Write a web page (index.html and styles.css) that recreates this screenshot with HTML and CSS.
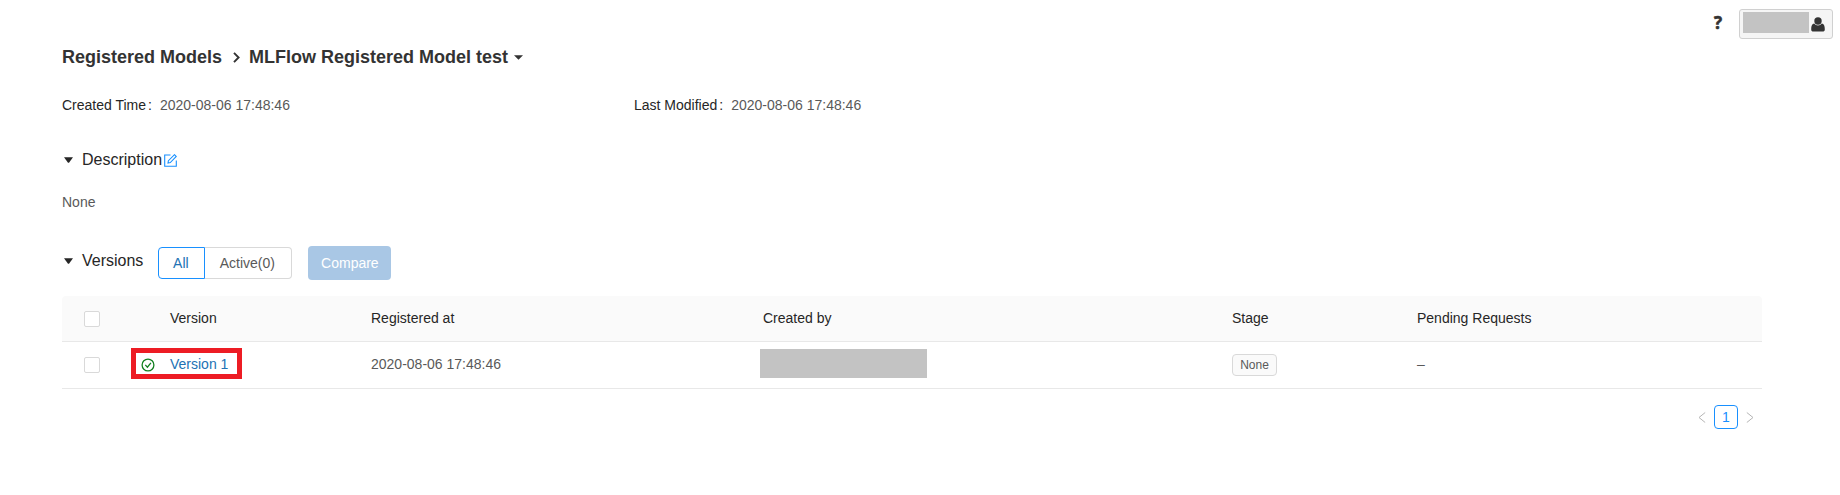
FILE: index.html
```
<!DOCTYPE html>
<html lang="en">
<head>
<meta charset="utf-8">
<title>Registered Model</title>
<link rel="stylesheet" href="styles.css">
</head>
<body>
<header class="topbar">
  <span class="help">?</span>
  <div class="user">
    <span class="user-name"></span>
    <svg class="user-icon" width="14" height="15" viewBox="0 0 14 15"><circle cx="7" cy="4" r="3.7"/><path d="M3.2 6.6C1 7 .2 9 .2 12.2.2 14 1 14.6 2.4 14.6h9.2c1.400 0 2.200-.6 2.200-2.400 0-3.200-.8-5.200-3-5.600C9.800 7.900 8.500 8.500 7 8.500S4.200 7.900 3.200 6.600z"/></svg>
  </div>
</header>
<main class="page">
  <h1 class="title">
    <span class="crumb">Registered Models</span>
    <svg class="chevron" width="7" height="11" viewBox="0 0 7 11"><path d="M1 .8l4.600 4.700L1 10.200"/></svg>
    <span class="model">MLFlow Registered Model test</span>
    <svg class="title-caret" width="9" height="5" viewBox="0 0 9 5"><path d="M0 .2h9L4.500 4.800z"/></svg>
  </h1>
  <dl class="meta">
    <div class="meta-item"><dt>Created Time</dt><dd>2020-08-06 17:48:46</dd></div>
    <div class="meta-item"><dt>Last Modified</dt><dd>2020-08-06 17:48:46</dd></div>
  </dl>
  <section class="section">
    <svg class="caret" width="9" height="6" viewBox="0 0 9 6"><path d="M0 .3h9L5 5.700H4z"/></svg>
    <h2>Description</h2>
    <svg class="edit" width="13" height="13" viewBox="0 0 13 13"><path d="M6.500 1H.7v11.300h11.600V6.500"/><path d="M4 9l.4-2.300L10.500.7l1.800 1.800L6.300 8.600z"/></svg>
  </section>
  <p class="description">None</p>
  <section class="section versions">
    <svg class="caret" width="9" height="6" viewBox="0 0 9 6"><path d="M0 .3h9L5 5.700H4z"/></svg>
    <h2>Versions</h2>
    <div class="filter">
      <button class="option active">All</button><button class="option">Active(0)</button>
    </div>
    <button class="compare">Compare</button>
  </section>
  <table class="table">
    <colgroup><col class="c-check"><col class="c-status"><col class="c-version"><col class="c-date"><col class="c-author"><col class="c-stage"><col></colgroup>
    <thead>
      <tr><th class="check"><span class="checkbox"></span></th><th></th><th>Version</th><th>Registered at</th><th>Created by</th><th>Stage</th><th>Pending Requests</th></tr>
    </thead>
    <tbody>
      <tr>
        <td class="check"><span class="checkbox"></span></td>
        <td class="status"><span class="highlight"></span><svg class="ready" width="14" height="14" viewBox="0 0 14 14"><circle cx="7" cy="7" r="5.900"/><path d="M4.300 6.900l2.100 2.300 3.500-4.400"/></svg></td>
        <td><a class="link">Version 1</a></td>
        <td>2020-08-06 17:48:46</td>
        <td><span class="author"></span></td>
        <td><span class="tag">None</span></td>
        <td>–</td>
      </tr>
    </tbody>
  </table>
  <nav class="pager">
    <svg width="8" height="12" viewBox="0 0 8 12"><path d="M7.200 1.500L1 6.500l6.200 5"/></svg>
    <span class="page-number">1</span>
    <svg width="8" height="12" viewBox="0 0 8 12"><path d="M.8 1.500l6.200 5-6.200 5"/></svg>
  </nav>
</main>
</body>
</html>
```
FILE: styles.css
```
* { box-sizing: border-box; }
body { margin: 0; background: #fff; color: #595959; font: 14px/22px "Liberation Sans", Arial, sans-serif; }
svg { display: block; flex: none; }
button { font: inherit; margin: 0; }

.topbar { display: flex; justify-content: flex-end; align-items: center; height: 39px; padding: 9px 7px 0 0; }
.help { margin-right: 17px; font: bold 17px/28px "Open Sans", sans-serif; color: #333; height: 30px; -webkit-text-stroke: .6px #333; }
.user { display: flex; width: 94px; height: 30px; padding: 2px 0 0 3px; border: 1px solid #d0d0d0; border-radius: 3px; background: #f5f5f5; }
.user-name { width: 66px; height: 21px; background: #c3c3c3; }
.user-icon { margin: 5px 0 0 2px; fill: #333; }

.page { padding: 0 78px 0 62px; }
.title { display: flex; align-items: center; height: 24px; margin: 6px 0 0; font-size: 18px; line-height: 24px; color: #333; white-space: nowrap; }
.crumb { width: 171px; }
.chevron { margin-right: 9px; fill: none; stroke: #333; stroke-width: 1.900; }
.model { width: 265px; }
.title-caret { fill: #333; }

.meta { display: flex; margin: 25px 0 0; height: 22px; }
.meta-item { display: flex; width: 572px; }
dt { color: #262626; }
dt::after { content: ":"; margin: 0 8px 0 2px; }
dd { margin: 0; }

.section { display: flex; align-items: center; height: 24px; margin-top: 32px; }
.caret { margin: 0 9px 0 2px; fill: #262626; }
.section h2 { margin: 0; font-size: 16px; line-height: 24px; font-weight: 400; color: #262626; }
.edit { margin-left: 2px; fill: none; stroke: #1890ff; stroke-width: 1.100; }
.description { margin: 19px 0 0; }
.versions { height: 34px; margin-top: 33px; }
.versions .caret, .versions h2 { margin-bottom: 4px; }
.filter { display: flex; margin-left: 15px; }
.option { width: 87px; height: 32px; padding: 0 2px 0 0; border: 1px solid #d9d9d9; border-left: 0; border-radius: 0 4px 4px 0; background: #fff; color: #595959; }
.option.active { width: 47px; border: 1px solid #1890ff; border-radius: 4px 0 0 4px; color: #2272b4; }
.compare { width: 83px; height: 34px; margin-left: 16px; padding: 0; border: 0; border-radius: 4px; background: #a9c7e5; color: #fff; }

.table { width: 1700px; margin-top: 16px; table-layout: fixed; border-collapse: separate; border-spacing: 0; }
.table th, .table td { height: 47px; padding: 0 0 2px; border-bottom: 1px solid #e8e8e8; text-align: left; font-weight: 400; vertical-align: middle; }
.table th { height: 46px; background: #fafafa; color: #262626; }
.table .check, .table .status { padding-bottom: 0; }
.table th:first-child { border-top-left-radius: 4px; }
.table th:last-child { border-top-right-radius: 4px; }
.c-check { width: 69px; }
.c-status { width: 39px; }
.c-version { width: 201px; }
.c-date { width: 392px; }
.c-author { width: 469px; }
.c-stage { width: 185px; }
.checkbox { display: block; width: 16px; height: 16px; margin-left: 22px; border: 1px solid #d9d9d9; border-radius: 2px; background: #fff; }
.status { position: relative; }
.highlight { position: absolute; left: 0; top: 6px; width: 111px; height: 31px; border: 5px solid #ed1c24; }
.ready { margin: -1px 0 0 10px; fill: none; stroke: #128020; stroke-width: 1.300; }
.link { color: #2272b4; }
.author { display: block; width: 167px; height: 29px; margin-left: -3px; margin-top: -1px; background: #c3c3c3; }
.tag { display: inline-block; width: 45px; height: 22px; border: 1px solid #d9d9d9; border-radius: 4px; background: #fafafa; font-size: 12px; line-height: 20px; text-align: center; vertical-align: middle; }

.pager { display: flex; justify-content: flex-end; align-items: center; margin: 16px 8px 0 0; height: 24px; gap: 8px; }
.pager svg { fill: none; stroke: #b5b5b5; }
.page-number { width: 24px; height: 24px; border: 1px solid #1890ff; border-radius: 4px; color: #1890ff; line-height: 22px; text-align: center; }
```
